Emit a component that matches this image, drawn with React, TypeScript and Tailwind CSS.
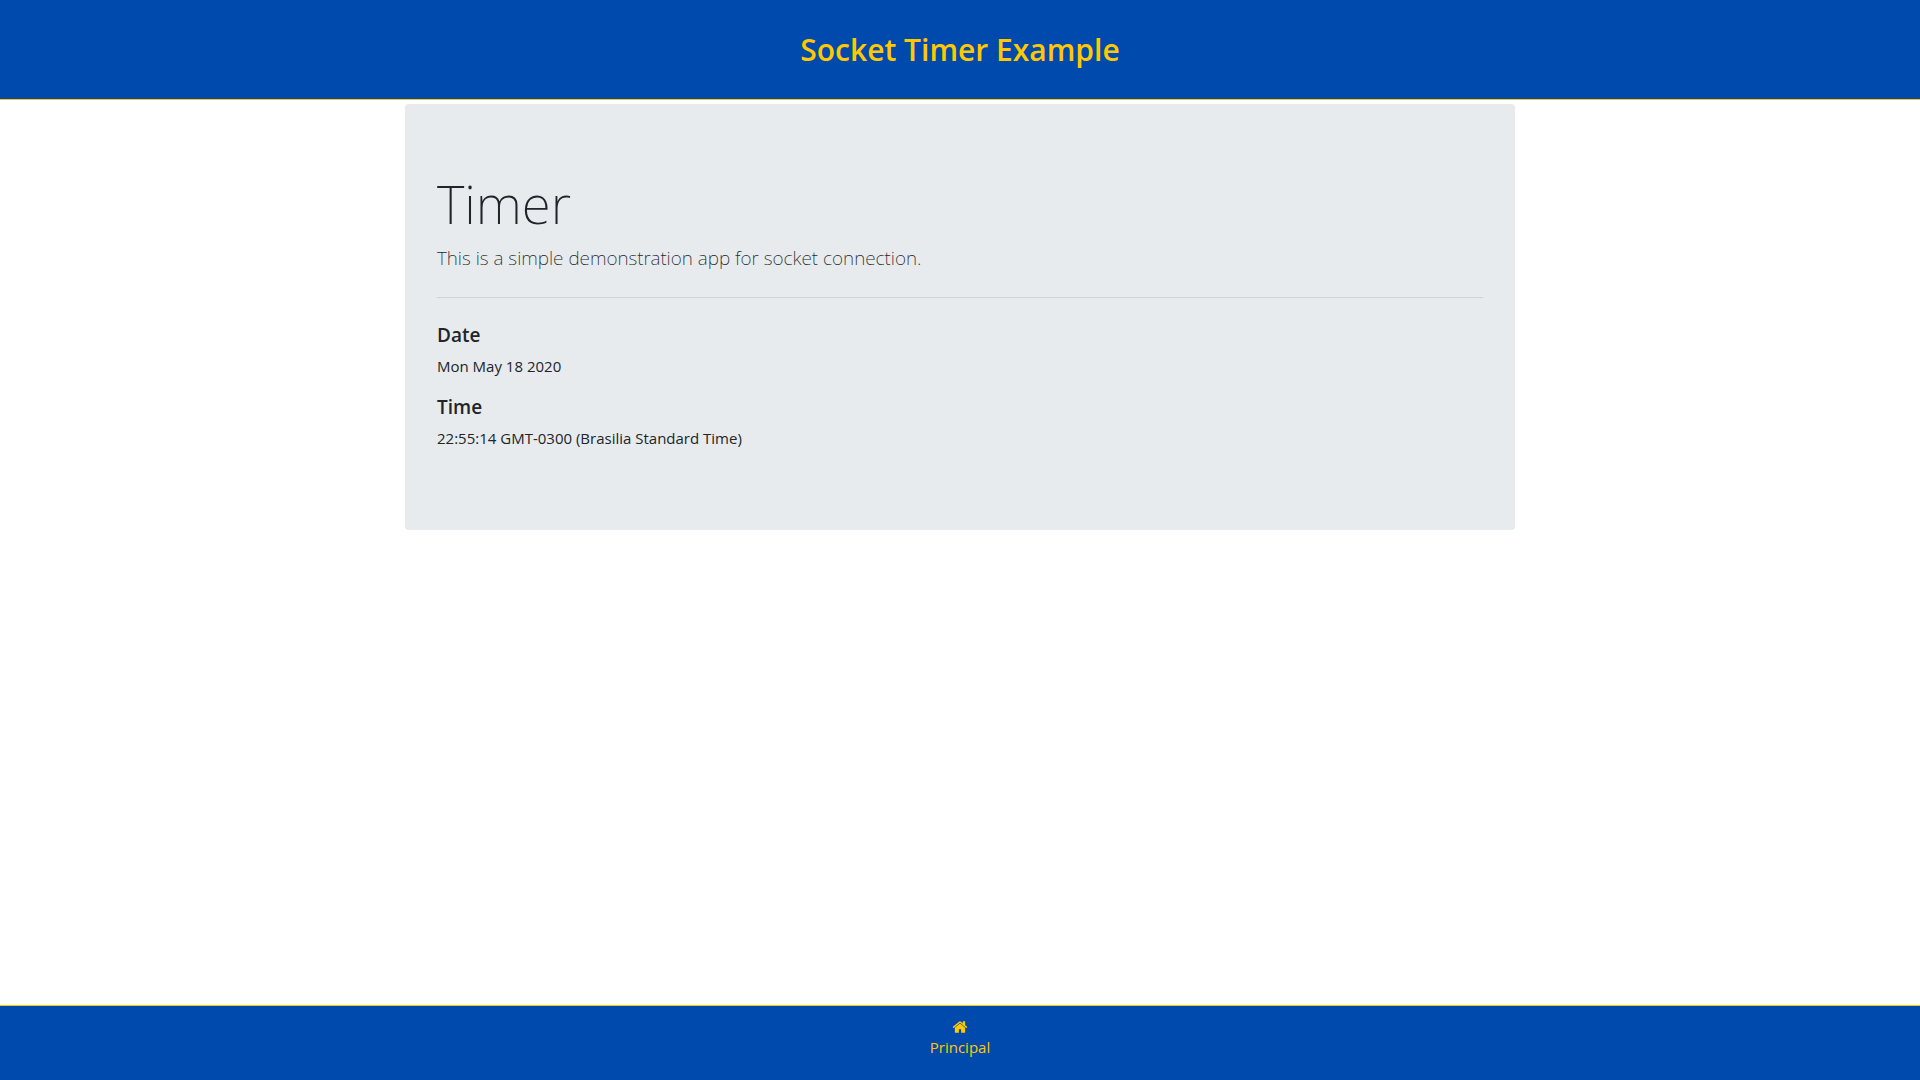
const entries = [
  { label: "Date", value: "Mon May 18 2020" },
  { label: "Time", value: "22:55:14 GMT-0300 (Brasilia Standard Time)" },
];

function HomeIcon() {
  return (
    <svg viewBox="0 0 1792 1792" className="size-4" fill="currentColor" aria-hidden="true">
      <path d="M1472 992v480q0 26-19 45t-45 19h-384v-384h-256v384h-384q-26 0-45-19t-19-45v-480q0-1 .5-3t.5-3l575-474 575 474q1 2 1 6zm223-69l-62 74q-8 9-21 11h-3q-13 0-21-7l-692-577-692 577q-12 8-24 7-13-2-21-11l-62-74q-8-10-7-23.5t11-21.5l719-599q32-26 76-26t76 26l244 204v-195q0-14 9-23t23-9h192q14 0 23 9t9 23v408l219 182q10 8 11 21.5t-7 23.5z" />
    </svg>
  );
}

export default function App() {
  return (
    <div className="flex min-h-screen flex-col bg-white font-['Open_Sans','Noto_Sans',sans-serif] text-base text-[#212529]">
      <header className="flex h-25 items-center justify-center border-b border-[#ffc800] bg-[#004aad]">
        <h1 className="text-[30px] leading-10 font-semibold text-[#ffc800]">Socket Timer Example</h1>
      </header>
      <main className="mx-auto mt-1 w-full max-w-[1110px] grow">
        <section className="rounded bg-[#e7ebee] px-8 py-16">
          <h2 className="pt-1 font-['Noto_Sans',sans-serif] text-[53px] leading-[63px] font-extralight">Timer</h2>
          <p className="mt-2 font-['Noto_Sans',sans-serif] text-[19px] leading-[30px] font-extralight">
            This is a simple demonstration app for socket connection.
          </p>
          <hr className="my-6 border-[#ced2d5]" />
          <dl>
            {entries.map((entry) => (
              <div key={entry.label} className="mb-4">
                <dt className="mb-1.5 text-[19px] leading-[26px] font-semibold">{entry.label}</dt>
                <dd className="text-[15px] leading-6">{entry.value}</dd>
              </div>
            ))}
          </dl>
        </section>
      </main>
      <footer className="flex h-[75px] justify-center border-t border-[#ffc800] bg-[#004aad] pt-[13px]">
        <a href="#principal" className="flex flex-col items-center text-[15px] leading-6 text-[#ffc800]">
          <HomeIcon />
          Principal
        </a>
      </footer>
    </div>
  );
}
